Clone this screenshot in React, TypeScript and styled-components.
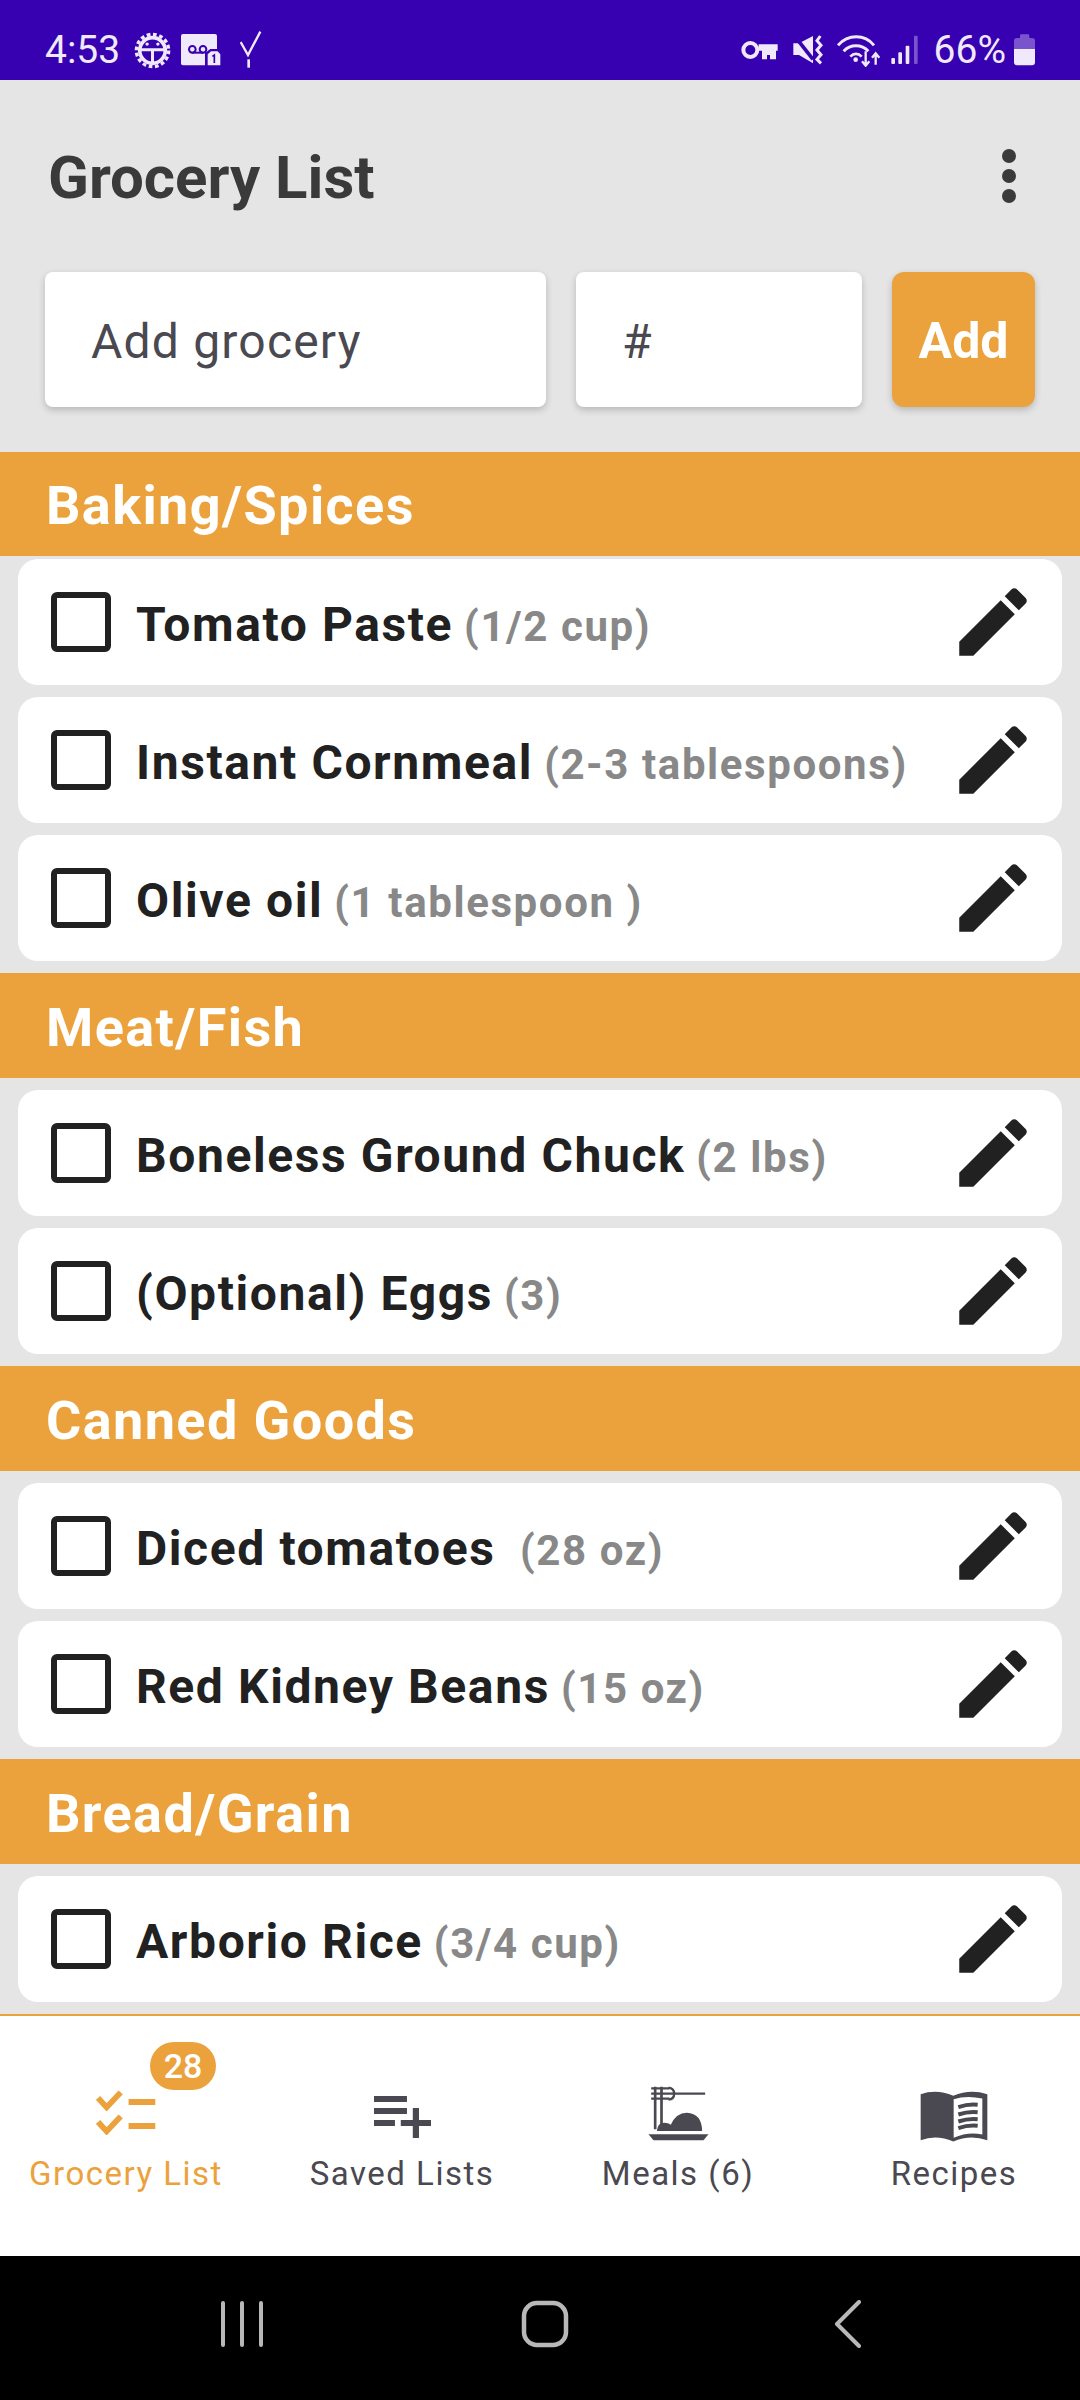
import React from "react";
import styled, { createGlobalStyle } from "styled-components";

const ORANGE = "#eba23c";
const DARK = "#212121";
const NAVINK = "#4a4850";
const BARINK = "#f0e9fb";

const GlobalStyle = createGlobalStyle`
    html, body {
        margin: 0;
        padding: 0;
        background: #e5e5e5;
    }

    * {
        box-sizing: border-box;
    }
`;

const Screen = styled.div`
    width: 1080px;
    height: 2400px;
    display: flex;
    flex-direction: column;
    overflow: hidden;
    background: #e5e5e5;
    font-family: Roboto, "Liberation Sans", sans-serif;
`;

const StatusBar = styled.div`
    height: 80px;
    padding: 20px 45px 0 45px;
    display: flex;
    align-items: center;
    justify-content: space-between;
    background: #3700b0;
    color: ${BARINK};
    font-size: 39px;
`;

const StatusGroup = styled.div`
    display: flex;
    align-items: center;
`;

const StatusText = styled.span<any>`
    margin-right: ${props => props.$after || 0}px;
    line-height: 60px;
`;

const StatusIcon = styled.svg<any>`
    display: block;
    margin-right: ${props => props.$after || 0}px;
`;

const Content = styled.div`
    flex: 1;
    min-height: 0;
    display: flex;
    flex-direction: column;
`;

const TitleRow = styled.div`
    height: 192px;
    padding: 4px 64px 0 48px;
    display: flex;
    align-items: center;
    justify-content: space-between;
`;

const Title = styled.h1`
    margin: 0;
    font-size: 60px;
    font-weight: 700;
    color: #3a3a3a;
`;

const Kebab = styled.svg`
    margin-top: -4px;
    fill: #3a3a3a;
`;

const AddRow = styled.div`
    height: 135px;
    margin: 0 45px 45px 45px;
    display: flex;
    gap: 30px;
`;

const Field = styled.div<any>`
    width: ${props => props.$width}px;
    padding: 5px 0 0 ${props => props.$inset}px;
    display: flex;
    align-items: center;
    background: #fff;
    border-radius: 8px;
    box-shadow: 0 3px 7px rgba(0, 0, 0, 0.2);
    color: ${NAVINK};
    font-size: 48px;
    letter-spacing: 1.2px;
`;

const AddButton = styled.div`
    width: 143px;
    padding-top: 4px;
    display: flex;
    align-items: center;
    justify-content: center;
    background: ${ORANGE};
    border-radius: 12px;
    box-shadow: 0 3px 7px rgba(0, 0, 0, 0.2);
    color: #fff;
    font-size: 50px;
    font-weight: 700;
`;

const SectionHeader = styled.div`
    height: 105px;
    padding: 3px 0 0 46px;
    display: flex;
    align-items: center;
    background: ${ORANGE};
    color: #fff;
    font-size: 54px;
    font-weight: 700;
    letter-spacing: 1.4px;
`;

const RowList = styled.div<any>`
    padding: ${props => props.$top}px 18px 12px 18px;
    display: flex;
    flex-direction: column;
    gap: 12px;
`;

const Row = styled.div`
    height: 126px;
    padding: 0 24px 0 33px;
    display: flex;
    align-items: center;
    background: #fff;
    border-radius: 20px;
`;

const CheckBox = styled.div`
    width: 60px;
    height: 60px;
    flex: none;
    margin-right: 25px;
    border: 6px solid ${DARK};
    border-radius: 6px;
`;

const RowText = styled.div`
    flex: 1;
    min-width: 0;
    white-space: pre;
    padding-top: 4px;
    font-size: 38px;
    letter-spacing: 1.6px;
`;

const Name = styled.span`
    color: ${DARK};
    font-size: 48px;
    font-weight: 700;
    letter-spacing: 1.6px;
`;

const Quantity = styled.span`
    color: #888888;
    font-size: 42px;
    font-weight: 700;
    letter-spacing: 1.6px;
`;

const EditIcon = styled.svg`
    width: 90px;
    height: 90px;
    flex: none;
    fill: ${DARK};
`;

const BottomNav = styled.div`
    height: 242px;
    display: grid;
    grid-template-columns: repeat(4, 276px);
    justify-content: center;
    background: #fff;
    border-top: 2px solid ${ORANGE};
`;

const NavItem = styled.div<any>`
    position: relative;
    display: flex;
    flex-direction: column;
    align-items: center;
    color: ${props => (props.$active ? ORANGE : NAVINK)};
    font-size: 33px;
    letter-spacing: 1.5px;
`;

const NavIconSlot = styled.div<any>`
    height: 136px;
    display: flex;
    align-items: flex-end;
    padding-bottom: ${props => props.$lift}px;
`;

const NavLabel = styled.div`
    margin-top: 2px;
`;

const Badge = styled.div`
    position: absolute;
    top: 26px;
    left: 162px;
    width: 66px;
    height: 48px;
    display: flex;
    align-items: center;
    justify-content: center;
    border-radius: 24px;
    background: ${ORANGE};
    color: #fff;
    font-size: 34px;
    font-weight: 500;
    letter-spacing: 0;
`;

const SystemBar = styled.div`
    height: 144px;
    padding: 0 0 8px 10px;
    display: grid;
    grid-template-columns: repeat(3, 303px);
    justify-content: center;
    align-items: center;
    justify-items: center;
    background: #000;
`;

const sections = [
    { title: "Baking/Spices", top: 3, items: [
        ["Tomato Paste", "(1/2 cup)"],
        ["Instant Cornmeal", "(2-3 tablespoons)"],
        ["Olive oil", "(1 tablespoon )"],
    ] },
    { title: "Meat/Fish", top: 12, items: [
        ["Boneless Ground Chuck", "(2 lbs)"],
        ["(Optional) Eggs", "(3)"],
    ] },
    { title: "Canned Goods", top: 12, items: [
        ["Diced tomatoes ", "(28 oz)"],
        ["Red Kidney Beans", "(15 oz)"],
    ] },
    { title: "Bread/Grain", top: 12, items: [
        ["Arborio Rice", "(3/4 cup)"],
    ] },
];

const GearIcon = () => (
    <StatusIcon $after={10} width="37" height="37" viewBox="402 95 110 110" fill="none" stroke={BARINK}>
        <circle cx="457" cy="150" r="38" strokeWidth="11" />
        <circle cx="457" cy="150" r="48" strokeWidth="10" strokeDasharray="11 7.85" />
        <path d="M420 148H494M457 148V190" strokeWidth="9" />
        <circle cx="441" cy="131" r="5" fill={BARINK} stroke="none" />
        <circle cx="473" cy="131" r="5" fill={BARINK} stroke="none" />
    </StatusIcon>
);

const VoicemailIcon = () => (
    <StatusIcon $after={19} width="40" height="32" viewBox="540 103 120 96">
        <rect x="540" y="103" width="108" height="94" rx="6" fill={BARINK} />
        <circle cx="574" cy="149" r="10" fill="none" stroke="#3700b0" strokeWidth="6" />
        <circle cx="606" cy="149" r="10" fill="none" stroke="#3700b0" strokeWidth="6" />
        <path d="M574 159H606" stroke="#3700b0" strokeWidth="6" />
        <path d="M612 197V160L628 148H652L664 160V200H612Z" fill="#3700b0" />
        <path d="M620 197V164L630 155H650L658 164V197Z" fill={BARINK} />
        <path d="M634 170L640 166V190" fill="none" stroke="#3700b0" strokeWidth="5" />
    </StatusIcon>
);

const SignalCheckIcon = () => (
    <StatusIcon width="22" height="38" viewBox="714 93 66 114" fill="none" stroke={BARINK}>
        <path d="M775 95L738 165L716 126" strokeWidth="7" />
        <path d="M740 178V203" strokeWidth="8" />
    </StatusIcon>
);

const KeyIcon = () => (
    <StatusIcon $after={15} width="37" height="21" viewBox="137 120 111 63" fill="none" stroke={BARINK}>
        <circle cx="165" cy="150" r="21" strokeWidth="12" />
        <path d="M190 133H247V152H242V178H224V165H215V178H200V152H190Z" fill={BARINK} stroke="none" />
    </StatusIcon>
);

const MuteIcon = () => (
    <StatusIcon $after={14} width="30" height="30" viewBox="290 105 90 90" fill="none">
        <path d="M291 130H308L350 108V190L308 165H291Z" fill={BARINK} />
        <path d="M298 112L350 178" stroke="#3700b0" strokeWidth="11" />
        <path d="M372 108L362 122L374 136L362 150L374 164L362 178L374 190" stroke={BARINK} strokeWidth="9" />
    </StatusIcon>
);

const WifiIcon = () => (
    <StatusIcon $after={10} width="44" height="33" viewBox="422 98 132 99" fill="none" stroke={BARINK}>
        <path d="M425 132C455 98 505 98 533 132" strokeWidth="9" />
        <path d="M442 150C462 128 496 128 516 150" strokeWidth="9" />
        <path d="M462 166C472 155 486 155 496 166" strokeWidth="8" />
        <circle cx="478" cy="175" r="7" fill={BARINK} stroke="none" />
        <path d="M508 150V192M497 180L508 193L519 180" strokeWidth="7" />
        <path d="M538 158V190M527 169L538 156L549 169" strokeWidth="7" />
    </StatusIcon>
);

const SignalIcon = () => (
    <StatusIcon $after={16} width="27" height="30" viewBox="582 103 81 90">
        <rect x="583" y="172" width="11" height="18" rx="3" fill={BARINK} />
        <rect x="604" y="155" width="11" height="35" rx="3" fill={BARINK} />
        <rect x="626" y="135" width="11" height="55" rx="3" fill={BARINK} />
        <rect x="651" y="105" width="11" height="85" rx="3" fill="#7a54cc" />
    </StatusIcon>
);

const BatteryIcon = () => (
    <StatusIcon width="21" height="32" viewBox="942 103 63 96">
        <path d="M960 115V108Q960 104 964 104H984Q988 104 988 108V115H996Q1005 115 1005 124V148H942V124Q942 115 951 115Z" fill="#7a54cc" />
        <path d="M942 148H1005V188Q1005 197 996 197H951Q942 197 942 188Z" fill={BARINK} />
    </StatusIcon>
);

const ChecklistIcon = () => (
    <svg width="60" height="45" viewBox="280 240 175 135" preserveAspectRatio="none" fill="none" stroke={ORANGE}>
        <path d="M286 264L311 292L352 247" strokeWidth="17" />
        <path d="M286 336L311 364L352 319" strokeWidth="17" />
        <path d="M375 276H453M375 348H453" strokeWidth="18" />
    </svg>
);

const SavedListIcon = () => (
    <svg width="57" height="42" viewBox="1089 258 166 126" preserveAspectRatio="none" fill={NAVINK}>
        <rect x="1089" y="258" width="96" height="18" />
        <rect x="1089" y="294" width="96" height="18" />
        <rect x="1089" y="330" width="61" height="18" />
        <rect x="1167" y="330" width="88" height="18" />
        <rect x="1202" y="294" width="18" height="90" />
    </svg>
);

const MealIcon = () => (
    <svg width="61" height="55" viewBox="24 20 182 165" fill="none" stroke={NAVINK}>
        <path d="M33 27H88M33 58H88" strokeWidth="7" />
        <path d="M33 43H195" strokeWidth="7" />
        <path d="M85 25Q102 27 102 43Q102 59 85 61" strokeWidth="7" />
        <path d="M45 22V150M64 22V150" strokeWidth="8" />
        <path d="M50 155Q52 130 72 130Q85 130 92 136Q108 100 140 100Q185 102 186 155Z" fill={NAVINK} stroke="none" />
        <path d="M25 165H205L190 183H40Z" fill={NAVINK} stroke="none" />
    </svg>
);

const BookIcon = () => (
    <svg width="68" height="53" viewBox="60 30 204 158" fill={NAVINK}>
        <path d="M62 45Q110 28 160 50Q210 28 262 45V183Q210 165 160 187Q110 165 62 183Z" />
        <path d="M161 60Q200 48 247 58V166Q205 156 161 176Z" fill="#fff" />
        <path d="M175 84Q205 74 233 77M175 106Q205 96 233 99M175 127Q205 117 233 120M175 147Q205 137 233 140" fill="none" stroke={NAVINK} strokeWidth="12" />
    </svg>
);

const App = () => {
    return (
        <Screen>
            <GlobalStyle />
            <StatusBar>
                <StatusGroup>
                    <StatusText $after={14}>4:53</StatusText>
                    <GearIcon />
                    <VoicemailIcon />
                    <SignalCheckIcon />
                </StatusGroup>
                <StatusGroup>
                    <KeyIcon />
                    <MuteIcon />
                    <WifiIcon />
                    <SignalIcon />
                    <StatusText $after={8}>66%</StatusText>
                    <BatteryIcon />
                </StatusGroup>
            </StatusBar>
            <Content>
                <TitleRow>
                    <Title>Grocery List</Title>
                    <Kebab width="14" height="54" viewBox="0 0 14 54">
                        <circle cx="7" cy="7" r="7" />
                        <circle cx="7" cy="27" r="7" />
                        <circle cx="7" cy="47" r="7" />
                    </Kebab>
                </TitleRow>
                <AddRow>
                    <Field $width={501} $inset={46}>Add grocery</Field>
                    <Field $width={286} $inset={46}>#</Field>
                    <AddButton>Add</AddButton>
                </AddRow>
                {sections.map(section => (
                    <React.Fragment key={section.title}>
                        <SectionHeader>{section.title}</SectionHeader>
                        <RowList $top={section.top}>
                            {section.items.map(item => (
                                <Row key={item[0]}>
                                    <CheckBox />
                                    <RowText>
                                        <Name>{item[0]}</Name>{" "}<Quantity>{item[1]}</Quantity>
                                    </RowText>
                                    <EditIcon viewBox="0 0 24 24">
                                        <path d="M3 17.25V21h3.75L17.81 9.94l-3.75-3.75L3 17.25zM20.71 7.04c.39-.39.39-1.02 0-1.41l-2.34-2.34c-.39-.39-1.02-.39-1.41 0l-1.83 1.83 3.75 3.75 1.83-1.83z" />
                                    </EditIcon>
                                </Row>
                            ))}
                        </RowList>
                    </React.Fragment>
                ))}
            </Content>
            <BottomNav>
                <NavItem $active>
                    <NavIconSlot $lift={17}><ChecklistIcon /></NavIconSlot>
                    <NavLabel>Grocery List</NavLabel>
                    <Badge>28</Badge>
                </NavItem>
                <NavItem>
                    <NavIconSlot $lift={14}><SavedListIcon /></NavIconSlot>
                    <NavLabel>Saved Lists</NavLabel>
                </NavItem>
                <NavItem>
                    <NavIconSlot $lift={11}><MealIcon /></NavIconSlot>
                    <NavLabel>Meals (6)</NavLabel>
                </NavItem>
                <NavItem>
                    <NavIconSlot $lift={10}><BookIcon /></NavIconSlot>
                    <NavLabel>Recipes</NavLabel>
                </NavItem>
            </BottomNav>
            <SystemBar>
                <svg width="44" height="48" viewBox="0 0 44 48" fill="none" stroke="#b8b8b8" strokeWidth="4" strokeLinecap="round">
                    <path d="M3 3V45M22 3V45M41 3V45" />
                </svg>
                <svg width="48" height="48" viewBox="0 0 48 48" fill="none" stroke="#b8b8b8" strokeWidth="4.5">
                    <rect x="3" y="3" width="42" height="42" rx="13" />
                </svg>
                <svg width="28" height="48" viewBox="0 0 28 48" fill="none" stroke="#b8b8b8" strokeWidth="4" strokeLinecap="round" strokeLinejoin="round">
                    <path d="M25 2L3 24L25 46" />
                </svg>
            </SystemBar>
        </Screen>
    );
};

export default App;
